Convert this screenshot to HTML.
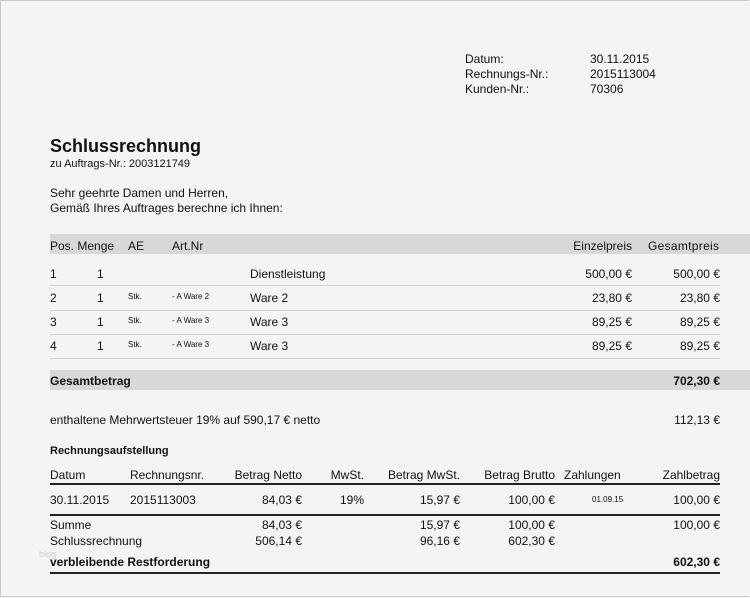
<!DOCTYPE html>
<html><head><meta charset="utf-8"><style>
body{margin:0;width:750px;height:598px;overflow:hidden;background:#f4f4f4;font-family:"Liberation Sans",Arial,sans-serif;color:#111;position:relative}
.bd{position:absolute;left:0;top:0;width:749px;height:597px;border-left:1px solid #c8c8c8;border-top:1px solid #c8c8c8;border-bottom:1px solid #c8c8c8;box-sizing:border-box}
.t{position:absolute;font-size:12px;white-space:nowrap;line-height:14px;margin-top:1px}
.r{text-align:right}
.s{font-size:8px}
.b{font-weight:bold}
.band{position:absolute;left:50px;width:700px;background:#d8d8d8}
.ln{position:absolute;left:50px;width:670px;height:1px;background:#d0d0d0}
.dk{position:absolute;left:50px;width:670px;background:#222}
</style></head><body><div class="bd"></div>
<div class="t" style="left:465px;top:51px">Datum:</div><div class="t" style="left:590px;top:51px">30.11.2015</div>
<div class="t" style="left:465px;top:66px">Rechnungs-Nr.:</div><div class="t" style="left:590px;top:66px">2015113004</div>
<div class="t" style="left:465px;top:81px">Kunden-Nr.:</div><div class="t" style="left:590px;top:81px">70306</div>
<div class="t b" style="left:50px;top:135px;font-size:18px;line-height:20px">Schlussrechnung</div>
<div class="t" style="left:50px;top:156px;font-size:11px">zu Auftrags-Nr.: 2003121749</div>
<div class="t" style="left:50px;top:185px">Sehr geehrte Damen und Herren,</div>
<div class="t" style="left:50px;top:200px">Gemäß Ihres Auftrages berechne ich Ihnen:</div>
<div class="band" style="top:234px;height:20px"></div>
<div class="t" style="left:50px;top:238px">Pos. Menge</div><div class="t" style="left:128px;top:238px">AE</div><div class="t" style="left:172px;top:238px">Art.Nr</div>
<div class="t r" style="left:532px;width:100px;top:238px">Einzelpreis</div>
<div class="t" style="left:648px;top:238px;width:72px;overflow:hidden;letter-spacing:0.3px">Gesamtpreis</div>
<div class="t" style="left:50px;top:266px">1</div><div class="t" style="left:97px;top:266px">1</div><div class="t" style="left:250px;top:266px">Dienstleistung</div>
<div class="t r" style="left:532px;width:100px;top:266px">500,00 €</div><div class="t r" style="left:620px;width:100px;top:266px">500,00 €</div>
<div class="ln" style="top:285px"></div>
<div class="t" style="left:50px;top:290px">2</div><div class="t" style="left:97px;top:290px">1</div><div class="t s" style="left:128px;top:289px">Stk.</div><div class="t s" style="left:172px;top:289px">- A Ware 2</div><div class="t" style="left:250px;top:290px">Ware 2</div>
<div class="t r" style="left:532px;width:100px;top:290px">23,80 €</div><div class="t r" style="left:620px;width:100px;top:290px">23,80 €</div>
<div class="ln" style="top:310px"></div>
<div class="t" style="left:50px;top:314px">3</div><div class="t" style="left:97px;top:314px">1</div><div class="t s" style="left:128px;top:313px">Stk.</div><div class="t s" style="left:172px;top:313px">- A Ware 3</div><div class="t" style="left:250px;top:314px">Ware 3</div>
<div class="t r" style="left:532px;width:100px;top:314px">89,25 €</div><div class="t r" style="left:620px;width:100px;top:314px">89,25 €</div>
<div class="ln" style="top:334px"></div>
<div class="t" style="left:50px;top:338px">4</div><div class="t" style="left:97px;top:338px">1</div><div class="t s" style="left:128px;top:337px">Stk.</div><div class="t s" style="left:172px;top:337px">- A Ware 3</div><div class="t" style="left:250px;top:338px">Ware 3</div>
<div class="t r" style="left:532px;width:100px;top:338px">89,25 €</div><div class="t r" style="left:620px;width:100px;top:338px">89,25 €</div>
<div class="ln" style="top:358px"></div>
<div class="band" style="top:370px;height:20px"></div>
<div class="t b" style="left:50px;top:373px">Gesamtbetrag</div><div class="t b r" style="left:620px;width:100px;top:373px">702,30 €</div>
<div class="t" style="left:50px;top:412px">enthaltene Mehrwertsteuer 19% auf 590,17 € netto</div><div class="t r" style="left:620px;width:100px;top:412px">112,13 €</div>
<div class="t b" style="left:50px;top:443px;font-size:11px">Rechnungsaufstellung</div>
<div class="t" style="left:50px;top:467px">Datum</div><div class="t" style="left:130px;top:467px">Rechnungsnr.</div>
<div class="t r" style="left:202px;width:100px;top:467px">Betrag Netto</div><div class="t r" style="left:264px;width:100px;top:467px">MwSt.</div>
<div class="t r" style="left:360px;width:100px;top:467px">Betrag MwSt.</div><div class="t r" style="left:455px;width:100px;top:467px">Betrag Brutto</div>
<div class="t" style="left:564px;top:467px">Zahlungen</div><div class="t r" style="left:620px;width:100px;top:467px">Zahlbetrag</div>
<div class="dk" style="top:483px;height:2px"></div>
<div class="t" style="left:50px;top:492px;width:66px;overflow:hidden">30.11.2015</div><div class="t" style="left:130px;top:492px">2015113003</div>
<div class="t r" style="left:202px;width:100px;top:492px">84,03 €</div><div class="t" style="left:340px;top:492px">19%</div>
<div class="t r" style="left:360px;width:100px;top:492px">15,97 €</div><div class="t r" style="left:455px;width:100px;top:492px">100,00 €</div>
<div class="t s" style="left:592px;top:492px">01.09.15</div><div class="t r" style="left:620px;width:100px;top:492px">100,00 €</div>
<div class="dk" style="top:514px;height:2px"></div>
<div class="t" style="left:50px;top:517px">Summe</div><div class="t r" style="left:202px;width:100px;top:517px">84,03 €</div>
<div class="t r" style="left:360px;width:100px;top:517px">15,97 €</div><div class="t r" style="left:455px;width:100px;top:517px">100,00 €</div><div class="t r" style="left:620px;width:100px;top:517px">100,00 €</div>
<div class="t" style="left:50px;top:533px">Schlussrechnung</div><div class="t r" style="left:202px;width:100px;top:533px">506,14 €</div>
<div class="t r" style="left:360px;width:100px;top:533px">96,16 €</div><div class="t r" style="left:455px;width:100px;top:533px">602,30 €</div>
<div class="t" style="left:39px;top:546px;font-size:9px;color:#ccc">blog</div>
<div class="t b" style="left:50px;top:554px">verbleibende Restforderung</div><div class="t b r" style="left:620px;width:100px;top:554px">602,30 €</div>
<div class="dk" style="top:572px;height:2px"></div>
</body></html>
